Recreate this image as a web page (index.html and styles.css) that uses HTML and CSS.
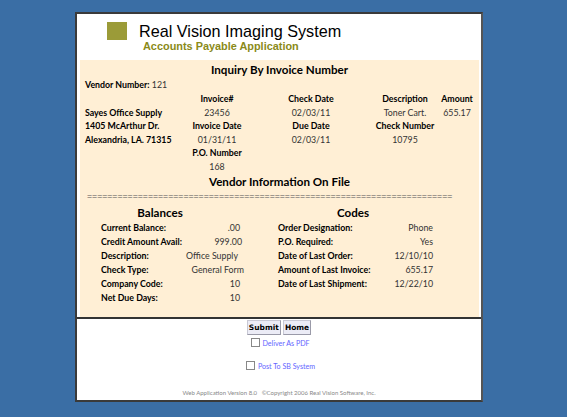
FILE: index.html
```html
<!DOCTYPE html>
<html>
<head>
<meta charset="utf-8">
<link rel="stylesheet" href="styles.css">
</head>
<body>
<div class="frame">
  <div class="top">
    <header class="brand">
      <div class="logo"></div>
      <div class="titles">
        <div class="title">Real Vision Imaging System</div>
        <div class="subtitle">Accounts Payable Application</div>
      </div>
    </header>
    <section class="panel">
      <h1 class="h1">Inquiry By Invoice Number</h1>
      <div class="vendor"><b>Vendor Number:</b> 121</div>
      <div class="inv">
        <span></span><b>Invoice#</b><b>Check Date</b><b>Description</b><b>Amount</b>
        <b class="addr">Sayes Office Supply</b><span>23456</span><span>02/03/11</span><span>Toner Cart.</span><span>655.17</span>
        <b class="addr">1405 McArthur Dr.</b><b>Invoice Date</b><b>Due Date</b><b>Check Number</b><span></span>
        <b class="addr">Alexandria, LA. 71315</b><span>01/31/11</span><span>02/03/11</span><span>10795</span><span></span>
        <span></span><b>P.O. Number</b><span></span><span></span><span></span>
        <span></span><span>168</span><span></span><span></span><span></span>
      </div>
      <h2 class="h2">Vendor Information On File</h2>
      <div class="rule">========================================================================</div>
      <div class="info">
        <div class="col bal">
          <h3 class="h3">Balances</h3>
          <div class="row"><b>Current Balance:</b><span>.00</span></div>
          <div class="row"><b>Credit Amount Avail:</b><span class="p2">999.00</span></div>
          <div class="row"><b>Description:</b><span class="p-2">Office Supply</span></div>
          <div class="row"><b>Check Type:</b><span class="p4">General Form</span></div>
          <div class="row"><b>Company Code:</b><span>10</span></div>
          <div class="row"><b>Net Due Days:</b><span>10</span></div>
        </div>
        <div class="col codes">
          <h3 class="h3">Codes</h3>
          <div class="row"><b>Order Designation:</b><span>Phone</span></div>
          <div class="row"><b>P.O. Required:</b><span>Yes</span></div>
          <div class="row"><b>Date of Last Order:</b><span>12/10/10</span></div>
          <div class="row"><b>Amount of Last Invoice:</b><span>655.17</span></div>
          <div class="row"><b>Date of Last Shipment:</b><span>12/22/10</span></div>
        </div>
      </div>
    </section>
  </div>
  <div class="bottom">
    <div class="buttons"><button class="btn">Submit</button><button class="btn">Home</button></div>
    <label class="opt opt1"><input type="checkbox" class="cb"><span>Deliver As PDF</span></label>
    <label class="opt opt2"><input type="checkbox" class="cb"><span>Post To SB System</span></label>
    <div class="footer">Web Application Version 8.0 &nbsp; ©Copyright 2006 Real Vision Software, Inc.</div>
  </div>
</div>
</body>
</html>
```

FILE: styles.css
```css
html, body {
  margin: 0;
  padding: 0;
}
body {
  background: #3a6ea5;
  font-family: "Lato", "Open Sans", sans-serif;
  color: #000;
  width: 567px;
  height: 417px;
  overflow: hidden;
}
.frame {
  margin: 12px 0 0 75px;
  width: 404px;
  height: 386px;
  border: 2px solid #3a3a3a;
  border-right-color: #555;
  background: #fff;
  display: flex;
  flex-direction: column;
}
.top {
  padding: 0 2px 0 3px;
  border-bottom: 2px solid #333;
}
.brand {
  height: 38px;
  padding: 8px 0 0 27px;
  display: flex;
  align-items: flex-start;
}
.logo {
  width: 20px;
  height: 18px;
  background: #9b9b38;
  margin-right: 12px;
}
.title {
  font-family: "Liberation Sans", Arial, sans-serif;
  font-size: 16.2px;
  line-height: 18px;
  color: #000;
}
.subtitle {
  font-family: "Liberation Sans", Arial, sans-serif;
  font-weight: bold;
  font-size: 10.9px;
  line-height: 13px;
  color: #8a8a18;
  padding-left: 4px;
}
.panel {
  background: #ffefd5;
  height: 257px;
  font-size: 8.8px;
}
.h1, .h2 {
  margin: 0;
  font-size: 11.6px;
  line-height: 16px;
  text-align: center;
  font-weight: bold;
}
.h1 {
  padding-top: 2px;
}
.vendor {
  line-height: 14px;
  padding-left: 5px;
  color: #333;
}
.vendor b {
  color: #000;
}
.inv {
  display: grid;
  grid-template-columns: 100px 64px 124px 64px 40px;
  grid-auto-rows: 13.6px;
  padding-left: 5px;
  line-height: 13.6px;
  text-align: center;
  color: #333;
}
.inv b {
  color: #000;
  white-space: nowrap;
}
.inv .addr {
  text-align: left;
}
.rule {
  font-family: "Liberation Sans", Arial, sans-serif;
  line-height: 12px;
  font-size: 8.7px;
  color: #555;
  padding-left: 7px;
  white-space: nowrap;
}
.info {
  margin-top: 3px;
  display: grid;
  grid-template-columns: 160px 226px;
}
.h3 {
  margin: 0;
  font-size: 11.6px;
  line-height: 16px;
  text-align: center;
  font-weight: bold;
}
.row {
  display: flex;
  justify-content: space-between;
  line-height: 14px;
  color: #333;
  white-space: nowrap;
}
.row b {
  color: #000;
}
.bal .row {
  padding-left: 21px;
}
.codes .row {
  padding-left: 38px;
  padding-right: 33px;
}
.p2 { margin-right: -2px; }
.p4 { margin-right: -4px; }
.p-2 { margin-right: 2px; }
.bottom {
  flex: 1;
  display: flex;
  flex-direction: column;
  align-items: center;
}
.buttons {
  margin-top: 1px;
  display: flex;
  gap: 2px;
}
.btn {
  font-family: "DejaVu Sans", Verdana, sans-serif;
  font-weight: bold;
  font-size: 7.5px;
  height: 15px;
  padding: 0 1px;
  margin: 0;
  background: #ececf6;
  border: 1px solid #9a9aa8;
  border-top-color: #c8c8d4;
  border-left-color: #c8c8d4;
  color: #000;
}
.opt {
  display: flex;
  align-items: center;
  height: 13px;
  font-size: 7.1px;
  color: #6464ff;
  padding-left: 3px;
}
.opt1 {
  margin-top: 2px;
}
.opt2 {
  margin-top: 9.5px;
}
.cb {
  appearance: none;
  -webkit-appearance: none;
  width: 9px;
  height: 9px;
  margin: 1px 2px 0 0;
  border: 1px solid #888;
  background: #fff;
  align-self: flex-start;
  box-sizing: border-box;
}
.opt2 .cb {
  margin-right: 3px;
}
.footer {
  margin-top: auto;
  margin-bottom: 1px;
  line-height: 12px;
  font-size: 6px;
  color: #888;
  white-space: pre;
}
```
